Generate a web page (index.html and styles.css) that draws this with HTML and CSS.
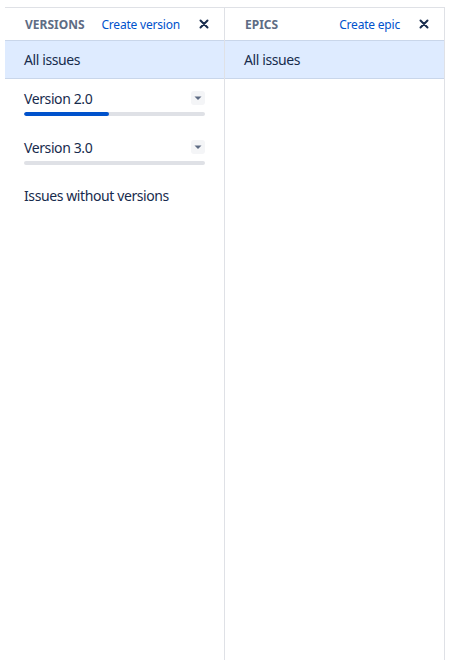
FILE: index.html
```html
<!DOCTYPE html>
<html>
<head>
<meta charset="utf-8">
<link rel="stylesheet" href="styles.css">
</head>
<body>
<div class="board">
  <section class="col">
    <header class="col-head">
      <span class="title">VERSIONS</span>
      <a class="link">Create version</a>
      <span class="close"><svg width="10" height="10" viewBox="0 0 10 10"><path d="M1.5 1.5L8.5 8.5M8.5 1.5L1.5 8.5" stroke="#172b4d" stroke-width="2" stroke-linecap="round"/></svg></span>
    </header>
    <div class="item selected">All issues</div>
    <div class="version">
      <div class="v-row"><span>Version 2.0</span><span class="caret"><svg width="14" height="14" viewBox="0 0 14 14"><path d="M3.5 5.5h7L7 9z" fill="#5e6c84"/></svg></span></div>
      <div class="bar"><div class="fill" style="width:47%"></div></div>
    </div>
    <div class="version">
      <div class="v-row"><span>Version 3.0</span><span class="caret"><svg width="14" height="14" viewBox="0 0 14 14"><path d="M3.5 5.5h7L7 9z" fill="#5e6c84"/></svg></span></div>
      <div class="bar"><div class="fill" style="width:0%"></div></div>
    </div>
    <div class="plain">Issues without versions</div>
  </section>
  <section class="col">
    <header class="col-head">
      <span class="title">EPICS</span>
      <a class="link">Create epic</a>
      <span class="close"><svg width="10" height="10" viewBox="0 0 10 10"><path d="M1.5 1.5L8.5 8.5M8.5 1.5L1.5 8.5" stroke="#172b4d" stroke-width="2" stroke-linecap="round"/></svg></span>
    </header>
    <div class="item selected">All issues</div>
  </section>
</div>
</body>
</html>
```
FILE: styles.css
```css
html, body {
  margin: 0;
  padding: 0;
  background: #fff;
}
body {
  font-family: "Noto Sans", "Open Sans", sans-serif;
  color: #172b4d;
  font-size: 14px;
  letter-spacing: -0.4px;
}
.board {
  margin: 7px 0 0 5px;
  width: 440px;
  height: 653px;
  display: flex;
  border-top: 1px solid #dfe1e6;
}
.col {
  width: 219px;
  border-right: 1px solid #dfe1e6;
  display: flex;
  flex-direction: column;
}
.col-head {
  height: 32px;
  display: flex;
  align-items: center;
  padding: 0 15px 0 20px;
  border-bottom: 1px solid #c9d6ea;
}
.title {
  font-size: 12px;
  font-weight: 700;
  color: #5e6c84;
  letter-spacing: 0;
  flex: 1;
}
.link {
  font-size: 12px;
  letter-spacing: -0.2px;
  color: #0052cc;
  margin-right: 19px;
}
.close {
  display: flex;
  width: 10px;
  height: 10px;
}
.item {
  height: 37px;
  line-height: 37px;
  padding-left: 19px;
  border-bottom: 1px solid #c9d6ea;
}
.selected {
  background: #deebff;
}
.version {
  padding: 10px 19px 12px 19px;
}
.v-row {
  display: flex;
  align-items: center;
  justify-content: space-between;
  height: 18px;
}
.caret {
  width: 14px;
  height: 14px;
  border-radius: 3px;
  background: #f4f5f7;
  display: flex;
}
.bar {
  margin-top: 5px;
  height: 4px;
  border-radius: 2px;
  background: #dfe1e6;
  overflow: hidden;
}
.fill {
  height: 100%;
  background: #0052cc;
  border-radius: 2px;
}
.plain {
  padding: 10px 19px;
  line-height: 18px;
}
```
